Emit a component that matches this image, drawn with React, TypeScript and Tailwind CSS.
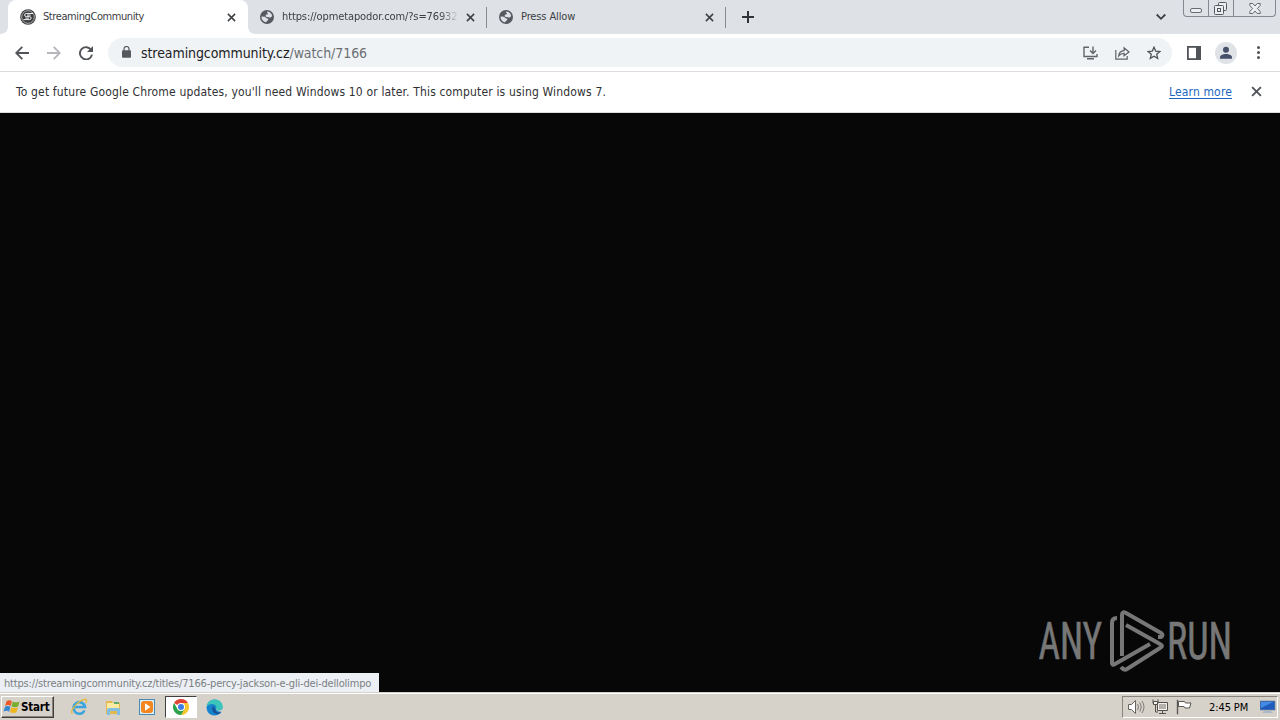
import React from 'react';

const tahoma = "font-['DejaVu_Sans_Condensed','DejaVu_Sans',sans-serif] font-stretch-condensed";

const Cross = ({ className = '' }: { className?: string }) => (
  <svg className={className} viewBox="0 0 10 10" fill="none" stroke="currentColor" strokeWidth="1.7">
    <path d="M1 1l8 8M9 1l-8 8" />
  </svg>
);

const Globe = () => (
  <svg className="h-[14px] w-[14px] shrink-0" viewBox="0 0 14 14">
    <circle cx="7" cy="7" r="7" fill="#56595e" />
    <path d="M7.5 1.4c2.4.2 4.5 2.3 4.7 4.8L10 7.8 8.3 7 6.8 7.2 5.6 6l.3-1.2 1.9-.5V3l-1-.6zM1.5 6.5l3.6.3 1.4 1.4 1.9.5-.3 1.5-1.3.8-.6 1.3C3.5 12 1.4 9.5 1.5 6.5z" fill="#dee1e6" />
  </svg>
);

const SiteIcon = () => (
  <svg className="h-4 w-4 shrink-0" viewBox="0 0 16 16" fill="none">
    <circle cx="8" cy="8" r="7.8" fill="#3b3c3e" />
    <circle cx="8" cy="8" r="6.3" stroke="#bbb" strokeWidth=".9" />
    <path d="M13 4.5H6.3Q4.6 4.5 4.6 6t1.7 1.6h3.4q1.4 0 1.4 1.5t-1.4 1.5H3.5M10.6 6.1H7M5.4 9.1H9" stroke="#f0f0f0" strokeWidth="1" />
  </svg>
);

const TabStrip = () => (
  <div className="relative flex h-[34px] bg-[#dee1e6] pl-2 text-[11px] text-[#3c4043]">
    <svg className="absolute bottom-0 left-0 h-2 w-2" viewBox="0 0 8 8"><path d="M8 0v8H0c5 0 8-3 8-8z" fill="#fff" /></svg>
    <div className="relative flex w-60 items-center rounded-t-lg bg-white pl-3 pr-3">
      <SiteIcon />
      <span className="ml-[7px] whitespace-nowrap pt-px tracking-[-0.41px]">StreamingCommunity</span>
      <Cross className="ml-auto h-[9px] w-[9px]" />
      <svg className="absolute -right-2 bottom-0 h-2 w-2" viewBox="0 0 8 8"><path d="M0 0v8h8c-5 0-8-3-8-8z" fill="#fff" /></svg>
    </div>
    <div className="flex w-[239px] items-center border-r border-[#888b90] pl-3 pr-[11px] [border-image:linear-gradient(transparent_8px,#888b90_8px,#888b90_27px,transparent_27px)_1]">
      <Globe />
      <span className="ml-2 w-[176px] overflow-hidden whitespace-nowrap pt-px tracking-[-0.11px] [mask-image:linear-gradient(to_right,#000_158px,transparent_177px)]">https://opmetapodor.com/?s=76932</span>
      <Cross className="ml-auto h-[9px] w-[9px]" />
    </div>
    <div className="flex w-[239px] items-center border-r pl-3 pr-[11px] [border-image:linear-gradient(transparent_8px,#888b90_8px,#888b90_27px,transparent_27px)_1]">
      <Globe />
      <span className="ml-2 whitespace-nowrap pt-px tracking-[-0.12px]">Press Allow</span>
      <Cross className="ml-auto h-[9px] w-[9px]" />
    </div>
    <svg className="ml-4 mt-[11px] h-3 w-3" viewBox="0 0 12 12" stroke="#303338" strokeWidth="2"><path d="M6 0v12M0 6h12" /></svg>
    <svg className="ml-auto mr-[17px] mt-[13px] h-2 w-[10px]" viewBox="0 0 10 8" fill="none" stroke="#3c4043" strokeWidth="1.8"><path d="M.7 1.5L5 5.8l4.3-4.3" /></svg>
    <div className="mr-[4px] flex h-[17px] w-[93px] rounded-b-[4px] border border-t-0 border-[#85888e] bg-[#dee1e6]">
      <div className="flex w-[25px] items-end justify-center border-r border-[#85888e] pb-[3px]">
        <div className="h-[5px] w-3 rounded-[2px] border border-[#686b70] bg-[#eceef1]" />
      </div>
      <div className="flex w-[25px] items-center justify-center border-r border-[#85888e] pr-px">
        <svg className="h-[13px] w-[13px]" viewBox="0 0 13 13" fill="#eceef1" stroke="#55585e"><rect x="4.5" y=".5" width="8" height="8" rx="1" /><rect x=".5" y="3.5" width="9" height="9" rx="1" /><rect x="3.5" y="6.5" width="3" height="3" /></svg>
      </div>
      <div className="flex flex-1 items-center justify-center">
        <svg className="h-[11px] w-3" viewBox="0 0 12 11" fill="#eceef1" stroke="#65686d"><path d="M.8.5h3L6 3 8.2.5h3v2L8.4 5.5l2.8 3v2h-3L6 8l-2.2 2.5h-3v-2l2.8-3L.8 2.5z" /></svg>
      </div>
    </div>
  </div>
);

const Toolbar = () => (
  <div className="flex h-[38px] items-center border-b border-[#dadce0] bg-white pl-[15px] pr-[14px] text-[#5f6368]">
    <svg className="h-[14px] w-[14px]" viewBox="0 0 14 14" fill="none" stroke="#505357" strokeWidth="1.8"><path d="M14 7H1.5M7.3.9L1.2 7l6.1 6.1" /></svg>
    <svg className="ml-[18px] h-[14px] w-[14px]" viewBox="0 0 14 14" fill="none" stroke="#b5b7ba" strokeWidth="1.8"><path d="M0 7h12.5M6.7.9L12.8 7l-6.1 6.1" /></svg>
    <svg className="ml-[18px] h-[14px] w-[14px]" viewBox="0 0 14 14" fill="none" stroke="#505357" strokeWidth="1.9"><path d="M12.2 4A6.1 6.1 0 1 0 13 8.6" /><path d="M14 0v6H8z" fill="#505357" stroke="none" /></svg>
    <div className="ml-[15px] flex h-[29px] w-[1064px] items-center rounded-full bg-[#f0f3f5] pl-[14px] pr-[11px]">
      <svg className="mb-0.5 h-3 w-[9px]" viewBox="0 0 9 12"><path d="M2 5V3a2.5 2.5 0 0 1 5 0v2" fill="none" stroke="#55585c" strokeWidth="1.2" /><rect y="4.3" width="9" height="7.5" rx="1" fill="#55585c" /></svg>
      <span className="ml-[10px] whitespace-nowrap pt-px text-[14px] tracking-[-0.08px] text-[#202124]">streamingcommunity.cz<span className="text-[#6b6f74]">/watch/7166</span></span>
      <svg className="ml-auto h-[14px] w-[15px]" viewBox="0 0 15 14" fill="none" stroke="#606468" strokeWidth="1.4"><path d="M6 1.2H1v9.3h13V8M10 .5v6M7 4.5l3 3 3-3M4 12.7h7" /></svg>
      <svg className="ml-[17px] h-[14px] w-[15px]" viewBox="0 0 15 14" fill="none" stroke="#606468" strokeWidth="1.2"><path d="M.8 4v9.2h11.4V10M3.7 9.8c.4-3.4 2.1-5 5.4-5.2V1.8L14 6 9.1 9.8V7.3c-2.4 0-3.9.6-5.4 2.5z" /></svg>
      <svg className="ml-[17px] h-[14px] w-[14px]" viewBox="0 0 14 14" fill="none" stroke="#505458" strokeWidth="1.3"><path d="M7 1.2l1.7 3.9 4.2.4-3.2 2.8 1 4.1L7 10.2l-3.7 2.2 1-4.1L1.1 5.5l4.2-.4z" /></svg>
    </div>
    <svg className="ml-[15px] h-[14px] w-[14px]" viewBox="0 0 14 14"><rect x=".9" y=".9" width="12.2" height="12.2" fill="none" stroke="#505357" strokeWidth="1.8" /><path d="M9 0h5v14H9z" fill="#505357" /></svg>
    <svg className="ml-[14px] h-[22px] w-[22px]" viewBox="0 0 22 22"><circle cx="11" cy="11" r="11" fill="#dfe2e6" /><circle cx="11" cy="7.8" r="3" fill="#46506a" /><path d="M5 16.8v-1.5c0-2 3-3.3 6-3.3s6 1.3 6 3.3v1.5z" fill="#46506a" /></svg>
    <svg className="ml-auto mr-[6px] h-[13px] w-[3px]" viewBox="0 0 3 13" fill="#505357"><circle cx="1.5" cy="1.6" r="1.5" /><circle cx="1.5" cy="6.5" r="1.5" /><circle cx="1.5" cy="11.4" r="1.5" /></svg>
  </div>
);

const InfoBar = () => (
  <div className="flex h-[41px] items-center border-b border-[#dcdedc] bg-white pl-4 pr-[18px] pb-px text-[12px] text-[#303134]">
    <span className="whitespace-nowrap tracking-[0.16px]">To get future Google Chrome updates, you'll need Windows 10 or later. This computer is using Windows 7.</span>
    <span className="ml-auto whitespace-nowrap tracking-[0.15px] text-[#1a67c0] underline underline-offset-2">Learn more</span>
    <Cross className="ml-[19px] h-[11px] w-[11px] text-[#505357]" />
  </div>
);

const Watermark = () => (
  <div className="absolute bottom-4 right-[42px] flex items-center text-[#777]">
    <svg className="h-[70px] w-[204px] overflow-visible" viewBox="0 0 204 70" fill="#777">
      <g fontFamily="Roboto, sans-serif" fontSize="51" stroke="#777" strokeWidth=".6">
        <text transform="translate(4.5 53) scale(.73 1)">ANY</text>
        <text transform="translate(133 53) scale(.745 1)">RUN</text>
      </g>
      <g fill="none" stroke="#777" strokeWidth="4" strokeLinejoin="round">
        <path d="M88 50V9q0-4 4-2l35 20q3 2 0 4l-3 0" />
        <path d="M83 12q-5 0-5 5v40q0 3 3 1l35-20" />
        <path d="M92 19l34 19q4 2 0 4L93 63q-3 2-6-2" />
      </g>
    </svg>
  </div>
);

const StartButton = () => (
  <div className="flex h-[22px] w-[53px] items-center border border-b-[#404040] border-l-white border-r-[#404040] border-t-white bg-[#d6d1c9] pl-px shadow-[inset_-1px_-1px_#888279]">
    <svg className="h-[18px] w-[17px] shrink-0" viewBox="0 0 16 16">
      <path d="M3.3 2.5q2.5-1.8 5-.2L7.2 7Q4.5 5.3 2 7z" fill="#e95826" />
      <path d="M9 2.8q3 1.6 6.5 0l-1.2 4.6q-3 1.6-6.3 0z" fill="#79ad2e" />
      <path d="M1.8 7.8q2.6-1.7 5.2 0L5.8 12.4q-2.8-1.8-5.3 0z" fill="#3488cf" />
      <path d="M7.8 8.2q3 1.7 6.2 0l-1.2 4.6q-3 1.6-6.2 0z" fill="#efb51c" />
    </svg>
    <span className="ml-px whitespace-nowrap pt-px text-[11.5px] font-bold tracking-[-0.2px] text-black">Start</span>
  </div>
);

const Taskbar = () => (
  <div className="flex h-7 items-center border-t border-[#d6d1c9] bg-[#d6d1c9] pl-px pr-[2px] pt-px shadow-[inset_0_1px_#fff]">
    <StartButton />
    {/* Internet Explorer */}
    <svg className="ml-[16px] h-[18px] w-[18px]" viewBox="0 0 18 18" fill="none">
      <path d="M14.5 12.5A5.8 5.8 0 1 1 15 9H5" stroke="#39a4de" strokeWidth="2.6" />
      <path d="M2.5 15.5C-1 14 6 5 12 2.2c5-2.2 5 0 3.8 2.8" stroke="#e7b83a" strokeWidth="1.3" />
    </svg>
    {/* Explorer */}
    <svg className="ml-[17px] h-[17px] w-[17px]" viewBox="0 0 17 17">
      <path d="M1 2h6l1 2h7v11H1z" fill="#e3b94f" /><path d="M2 4h12v6H2z" fill="#fbeaa1" /><path d="M9 3h5v2H9z" fill="#62ac6a" />
      <path d="M2 16v-5q0-2 2-2h9q2 0 2 2v5h-3v-4H5v4z" fill="#80bfe2" />
    </svg>
    {/* Media Player */}
    <svg className="ml-[17px] h-4 w-4" viewBox="0 0 16 16">
      <rect x=".5" y=".5" width="15" height="15" fill="#d9edf8" stroke="#4b8cb5" /><rect x="2" y="2" width="12" height="12" rx="3" fill="#f3861e" /><path d="M6 4.3L11.5 8 6 11.7z" fill="#fff" />
    </svg>
    <div className="ml-[10px] flex h-[22px] w-8 items-center justify-center border border-b-white border-l-[#404040] border-r-white border-t-[#404040] bg-white">
      <svg className="h-4 w-4" viewBox="0 0 16 16">
        <path d="M8 8L1.07 4A8 8 0 0 1 14.93 4z" fill="#e04234" />
        <path d="M8 8V4h6.93A8 8 0 0 1 8 16z" fill="#f7c52c" />
        <path d="M8 8l3.5 2L8 16A8 8 0 0 1 1.07 4L4.5 10z" fill="#2ba14b" />
        <circle cx="8" cy="8" r="4" fill="#fff" /><circle cx="8" cy="8" r="3" fill="#3d7de4" />
      </svg>
    </div>
    {/* Edge */}
    <svg className="ml-[9px] h-[17px] w-[17px]" viewBox="0 0 17 17">
      <circle cx="8.5" cy="8.5" r="8" fill="#1683cd" />
      <path d="M.7 8C1 3.5 4.5.5 8.7.5c5 0 8 3.6 8 7 0 3-2.3 4-4.3 4-2.5 0-3-1-2.2-2C11 8.3 9.5 5 6.2 5 3.5 5 1.5 6.2.7 8z" fill="#3cc6bb" />
      <path d="M7 7c-2 3 0 8 4.5 8 2 0 3.2-1 4-2-3 1.5-6 0-6.2-2.7L7 7z" fill="#174e94" />
      <path d="M10 8.2c.7 1 0 1.6.2 2.3.6 1.5 4.2 1.6 5.9-.6l1 2.6c-4 1-7-.2-7.1-4.3z" fill="#d6d1c9" />
    </svg>
    <div className="ml-auto flex h-[22px] w-[156px] items-center border border-b-white border-l-[#88847c] border-r-white border-t-[#88847c] pl-[5px] pr-px">
      <svg className="h-4 w-[17px]" viewBox="0 0 17 16" fill="#fff" stroke="#68655f"><path d="M.5 5.5h3l4-4v13l-4-4h-3z" /><path d="M9.5 5q2 3 0 6M11.8 3.5q3 4.5 0 9M14 2q4 6 0 12" fill="none" stroke="#77746e" strokeWidth=".9" /></svg>
      <svg className="ml-[7px] h-4 w-[17px]" viewBox="0 0 17 16" fill="#f3f2ef" stroke="#55524e"><path d="M5.5 3.5h10v8h-10z" /><path d="M7 5h7v5H7z" fill="#b4b1ab" stroke="none" /><path d="M7 14.5h7M10.5 12v2" /><path d="M1 .5v4h5v-4M3.5 5v8H6" fill="none" /><path d="M1.5 2.5h4v3h-4z" /></svg>
      <svg className="ml-[7px] h-4 w-4" viewBox="0 0 16 16" fill="#fff" stroke="#5b5853"><path d="M2.5 2.5h6l1 1.5h5.5l-1.5 5H9l-1-1.5H2.5z" /><path d="M1.5.8v14.5" strokeWidth="1.4" /></svg>
      <span className="ml-[17px] whitespace-nowrap pt-0.5 text-[11px] tracking-[-0.1px] text-black">2:45 PM</span>
      <svg className="ml-auto h-[14px] w-4" viewBox="0 0 16 14"><path d="M0 1h15v9H0z" fill="#205abc" stroke="#71899e" strokeWidth=".7" /><path d="M1 2h12L1 8z" fill="#438be4" /><path d="M4 11h7l2 2H2z" fill="#a9b8c6" /></svg>
    </div>
  </div>
);

const App: React.FC = () => (
  <div className={`${tahoma} flex h-[720px] w-[1280px] flex-col overflow-hidden bg-[#070707]`}>
    <TabStrip />
    <Toolbar />
    <InfoBar />
    <main className="relative flex-1 bg-[#070707]">
      <Watermark />
      <div className="absolute bottom-0 left-0 flex h-[19px] w-[379px] items-center bg-[#eceff3] pl-1 pt-[3px] text-[11px] text-[#7b7f84]">
        <span className="whitespace-nowrap tracking-[-0.175px]">https://streamingcommunity.cz/titles/7166-percy-jackson-e-gli-dei-dellolimpo</span>
      </div>
    </main>
    <Taskbar />
  </div>
);

export default App;
